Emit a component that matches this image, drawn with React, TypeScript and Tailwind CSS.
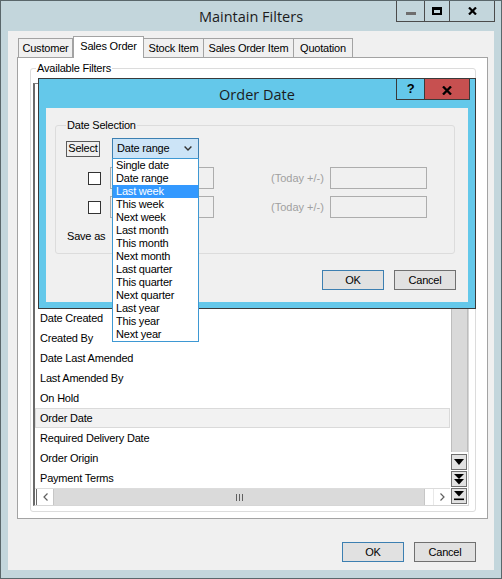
import React from "react";

const listItems = [
  "Date Created",
  "Created By",
  "Date Last Amended",
  "Last Amended By",
  "On Hold",
  "Order Date",
  "Required Delivery Date",
  "Order Origin",
  "Payment Terms",
];

const dropItems = [
  "Single date",
  "Date range",
  "Last week",
  "This week",
  "Next week",
  "Last month",
  "This month",
  "Next month",
  "Last quarter",
  "This quarter",
  "Next quarter",
  "Last year",
  "This year",
  "Next year",
];

function TriDown() {
  return (
    <svg width="10" height="6" viewBox="0 0 10 6">
      <polygon points="0,0 10,0 5,6" fill="#000" />
    </svg>
  );
}

function DoubleDown() {
  return (
    <svg width="10" height="11" viewBox="0 0 10 11">
      <polygon points="0,0 10,0 5,5" fill="#000" />
      <polygon points="0,5 10,5 5,10.5" fill="#000" />
    </svg>
  );
}

function ToBottom() {
  return (
    <svg width="10" height="10" viewBox="0 0 10 10">
      <polygon points="0,0 10,0 5,5.5" fill="#000" />
      <rect x="0" y="7.5" width="10" height="1.6" fill="#000" />
    </svg>
  );
}

function Tab({ label, w, selected }: { label: string; w: number; selected?: boolean }) {
  if (selected) {
    return (
      <div
        className="relative z-10 -mb-px h-[22px] bg-white border-t border-l border-r border-[#a3a3a3] flex items-center justify-center pb-[2px]"
        style={{ width: w }}
      >
        {label}
      </div>
    );
  }
  return (
    <div
      className="h-[19px] bg-[#f0f0f0] border-t border-l border-r border-[#a3a3a3] -ml-px first:ml-0 flex items-center justify-center"
      style={{ width: w }}
    >
      {label}
    </div>
  );
}

export default function App() {
  return (
    <div className="relative w-[502px] h-[579px] bg-[#c3d6dc] border border-[#5a676b] flex flex-col font-['Liberation_Sans',Arial,sans-serif] text-[11px] tracking-[-0.2px] text-black overflow-hidden">
      {/* Title bar */}
      <div className="relative h-[30px] shrink-0 flex items-center justify-center">
        <span className="font-['Open_Sans',sans-serif] text-[14.5px] tracking-normal text-[#1c1c1c] mt-[1px]">
          Maintain Filters
        </span>
        <div className="absolute top-[-1px] right-[6px] h-[22px] flex border border-[#4b4b4b]">
          <div className="w-[27px] flex items-end justify-center pb-[6px]">
            <div className="w-[10px] h-[3px] bg-[#6e6e6e]" />
          </div>
          <div className="w-[25px] border-l border-[#4b4b4b] flex items-center justify-center">
            <div className="w-[10px] h-[8px] border-[2px] border-t-[3px] border-black" />
          </div>
          <div className="w-[45px] border-l border-[#4b4b4b] flex items-center justify-center">
            <svg width="9" height="8" viewBox="0 0 9 8">
              <path d="M1 0.5 L8 7.5 M8 0.5 L1 7.5" stroke="#000" strokeWidth="2.2" />
            </svg>
          </div>
        </div>
      </div>

      {/* Client area */}
      <div className="mx-[7px] h-[539px] shrink-0 bg-[#f0f0f0] flex flex-col">
        {/* Tabs */}
        <div className="mt-[6px] pl-[10px] h-[20px] flex items-end">
          <Tab label="Customer" w={55} />
          <Tab label="Sales Order" w={71} selected />
          <Tab label="Stock Item" w={61} />
          <Tab label="Sales Order Item" w={91} />
          <Tab label="Quotation" w={60} />
        </div>

        {/* Tab panel */}
        <div className="ml-[9px] w-[471px] h-[462px] bg-white border border-[#a3a3a3] flex flex-col">
          {/* Available Filters group */}
          <div className="relative ml-[12px] mt-[10px] w-[446px] h-[444px] border border-[#dcdcdc] rounded-[3px] flex flex-col">
            <span className="absolute top-[-7px] left-[5px] bg-white px-[1px] leading-[13px]">
              Available Filters
            </span>
            {/* Listbox */}
            <div className="ml-[2px] mt-[14px] w-[436px] h-[423px] flex border-t border-t-[#828282] border-l-2 border-l-[#6a6a6a] border-r border-r-[#d6d6d6] border-b border-b-[#d6d6d6]">
              <div className="flex-1 flex flex-col">
                <div className="flex-1 flex flex-col justify-end">
                  {listItems.map((it) => (
                    <div
                      key={it}
                      className={
                        it === "Order Date"
                          ? "h-[20px] flex items-center pl-[4px] bg-[#f2f2f2] border border-[#dadada]"
                          : "h-[20px] flex items-center pl-[5px]"
                      }
                    >
                      {it}
                    </div>
                  ))}
                </div>
                {/* Horizontal scrollbar */}
                <div className="h-[17px] flex border-t border-[#dcdcdc] bg-white">
                  <div className="w-[17px] ml-[1px] border-l border-[#6a6a6a] flex items-center justify-center">
                    <svg width="5" height="8" viewBox="0 0 5 8">
                      <path d="M4.5 0.5 L1 4 L4.5 7.5" stroke="#606060" strokeWidth="1.2" fill="none" />
                    </svg>
                  </div>
                  <div className="w-[372px] bg-[#dadada] border-x border-[#c6c6c6] flex items-center justify-center gap-[2px]">
                    <div className="w-px h-[7px] bg-[#606060]" />
                    <div className="w-px h-[7px] bg-[#606060]" />
                    <div className="w-px h-[7px] bg-[#606060]" />
                  </div>
                  <div className="flex-1" />
                  <div className="w-[17px] border-l border-[#e8e8e8] flex items-center justify-center">
                    <svg width="5" height="8" viewBox="0 0 5 8">
                      <path d="M0.5 0.5 L4 4 L0.5 7.5" stroke="#606060" strokeWidth="1.2" fill="none" />
                    </svg>
                  </div>
                </div>
              </div>
              {/* Vertical column */}
              <div className="w-[18px] flex flex-col items-center">
                <div className="w-[17px] flex-1 bg-[#d9d9d9] border-x border-[#bdbdbd]" />
                <div className="mt-[2px] w-[16px] h-[16px] border border-[#707070] bg-[#e2e2e2] flex items-center justify-center">
                  <TriDown />
                </div>
                <div className="mt-[1px] w-[16px] h-[16px] border border-[#707070] bg-[#e2e2e2] flex items-center justify-center">
                  <DoubleDown />
                </div>
                <div className="mt-[1px] mb-[1px] w-[16px] h-[16px] border border-[#707070] bg-[#e2e2e2] flex items-center justify-center">
                  <ToBottom />
                </div>
              </div>
            </div>
          </div>
        </div>

        {/* Bottom buttons */}
        <div className="mt-[23px] pr-[18px] flex justify-end gap-[10px]">
          <div className="w-[62px] h-[20px] border border-[#3c7fb1] bg-[#e1e1e1] flex items-center justify-center">
            OK
          </div>
          <div className="w-[62px] h-[20px] border border-[#707070] bg-[#e1e1e1] flex items-center justify-center">
            Cancel
          </div>
        </div>
      </div>

      {/* Order Date dialog (overlay) */}
      <div className="absolute left-[37px] top-[77px] w-[438px] h-[231px] bg-[#64c8ea] border border-[#3a3a3a] flex flex-col">
        <div className="relative h-[29px] shrink-0 flex items-center justify-center">
          <span className="font-['Open_Sans',sans-serif] text-[14.5px] tracking-normal text-[#1c1c1c] mt-[2px]">
            Order Date
          </span>
          <div className="absolute top-[-1px] right-[5px] h-[22px] flex border border-[#3a3a3a]">
            <div className="w-[27px] flex items-center justify-center font-bold text-[13px] leading-none pb-[2px]">
              ?
            </div>
            <div className="w-[45px] border-l border-[#3a3a3a] bg-[#c75050] flex items-center justify-center pt-[2px]">
              <svg width="10" height="9" viewBox="0 0 10 9">
                <path d="M1 0.5 L9 8.5 M9 0.5 L1 8.5" stroke="#000" strokeWidth="2.3" />
              </svg>
            </div>
          </div>
        </div>
        <div className="mx-[7px] h-[194px] shrink-0 bg-[#f0f0f0] flex flex-col">
          {/* Date Selection group */}
          <div className="relative ml-[9px] mt-[17px] w-[400px] h-[129px] border border-[#dcdcdc] rounded-[3px] flex flex-col">
            <span className="absolute top-[-7px] left-[10px] bg-[#f0f0f0] px-[1px] leading-[13px]">
              Date Selection
            </span>
            <div className="mt-[12px] h-[21px] flex items-center">
              <div className="ml-[10px] w-[34px] h-[16px] border border-[#5a5a5a] bg-[#efefef] flex items-center justify-center">
                Select
              </div>
              <div className="relative ml-[12px] w-[87px] h-[21px] border border-[#3c7fb1] bg-[#cce4f7] flex items-center pl-[4px]">
                <span>Date range</span>
                <svg className="absolute right-[6px] top-[7px]" width="8" height="5" viewBox="0 0 8 5">
                  <path d="M0.6 0.6 L4 4 L7.4 0.6" stroke="#333" strokeWidth="1.4" fill="none" />
                </svg>
                {/* dropdown list (overlay) */}
                <div className="absolute left-[-1px] top-[19px] w-[87px] z-20 bg-white border border-[#3e98d3] flex flex-col">
                  {dropItems.map((d) => (
                    <div
                      key={d}
                      className={
                        d === "Last week"
                          ? "h-[13px] leading-[13px] pl-[3px] bg-[#3399ff] text-white"
                          : "h-[13px] leading-[13px] pl-[3px]"
                      }
                    >
                      {d}
                    </div>
                  ))}
                </div>
              </div>
            </div>
            <div className="mt-[8px] h-[22px] flex items-center">
              <div className="ml-[32px] w-[13px] h-[13px] border border-[#333] bg-white" />
              <div className="ml-[9px] w-[104px] h-[22px] border border-[#adadad] bg-[#f0f0f0]" />
              <span className="ml-[57px] text-[#a0a0a0] tracking-normal">(Today +/-)</span>
              <div className="ml-[6px] w-[97px] h-[22px] border border-[#adadad] bg-[#f0f0f0]" />
            </div>
            <div className="mt-[7px] h-[22px] flex items-center">
              <div className="ml-[32px] w-[13px] h-[13px] border border-[#333] bg-white" />
              <div className="ml-[9px] w-[104px] h-[22px] border border-[#adadad] bg-[#f0f0f0]" />
              <span className="ml-[57px] text-[#a0a0a0] tracking-normal">(Today +/-)</span>
              <div className="ml-[6px] w-[97px] h-[22px] border border-[#adadad] bg-[#f0f0f0]" />
            </div>
            <div className="mt-[12px] ml-[11px] leading-[13px]">Save as</div>
          </div>
          <div className="mt-[16px] pr-[12px] flex justify-end gap-[10px]">
            <div className="w-[62px] h-[20px] border border-[#3c7fb1] bg-[#e1e1e1] flex items-center justify-center">
              OK
            </div>
            <div className="w-[62px] h-[20px] border border-[#707070] bg-[#e1e1e1] flex items-center justify-center">
              Cancel
            </div>
          </div>
        </div>
      </div>
    </div>
  );
}
